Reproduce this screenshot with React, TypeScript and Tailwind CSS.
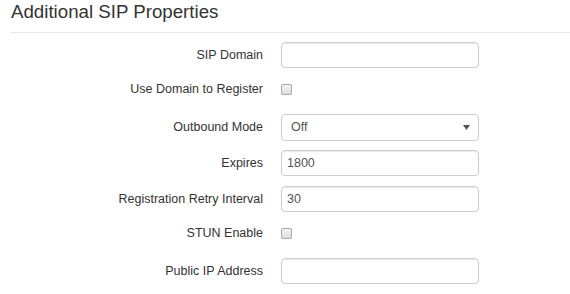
import React from "react";

const font = { fontFamily: '"Liberation Sans", Arial, sans-serif' };

function Label({ children }: { children: React.ReactNode }) {
  return <div className="w-[252px] shrink-0 text-right text-[12.5px] text-[#333]">{children}</div>;
}

function TextRow({ label, value = "" }: { label: string; value?: string }) {
  return (
    <div className="flex items-center h-[26px] mb-[10px] gap-[18px]">
      <Label>{label}</Label>
      <input
        className="w-[198px] h-[26px] border border-[#ccc] rounded-[4px] px-[5px] text-[12.5px] text-[#555] outline-none shadow-[inset_0_1px_1px_rgba(0,0,0,0.075)]"
        style={font}
        defaultValue={value}
      />
    </div>
  );
}

function CheckRow({ label }: { label: string }) {
  return (
    <div className="flex items-center h-[26px] mb-[10px] gap-[18px] pb-[4px]">
      <Label>{label}</Label>
      <div className="w-[11px] h-[11px] rounded-[2px] border border-[#a6a6a6] bg-gradient-to-b from-[#f4f4f4] to-[#dedede]" />
    </div>
  );
}

export default function App() {
  return (
    <div className="w-[570px] h-[294px] bg-white overflow-hidden" style={font}>
      <div className="ml-[11px] h-[33px] border-b border-[#e5e5e5] pt-[1px]">
        <h3 className="text-[18.7px] leading-[22px] text-[#333]">Additional SIP Properties</h3>
      </div>
      <div className="ml-[11px] mt-[9px]">
        <TextRow label="SIP Domain" />
        <CheckRow label="Use Domain to Register" />
        <div className="flex items-center h-[26px] mb-[10px] gap-[18px]">
          <Label>Outbound Mode</Label>
          <div className="relative w-[198px] h-[27px] border border-[#ccc] rounded-[4px] flex items-center pl-[9px] text-[12.5px] text-[#555]">
            Off
            <svg className="absolute right-[8px] top-[10px]" width="7" height="5" viewBox="0 0 7 5">
              <path d="M0 0H7L3.5 5Z" fill="#555" />
            </svg>
          </div>
        </div>
        <TextRow label="Expires" value="1800" />
        <TextRow label="Registration Retry Interval" value="30" />
        <CheckRow label="STUN Enable" />
        <TextRow label="Public IP Address" />
      </div>
    </div>
  );
}
